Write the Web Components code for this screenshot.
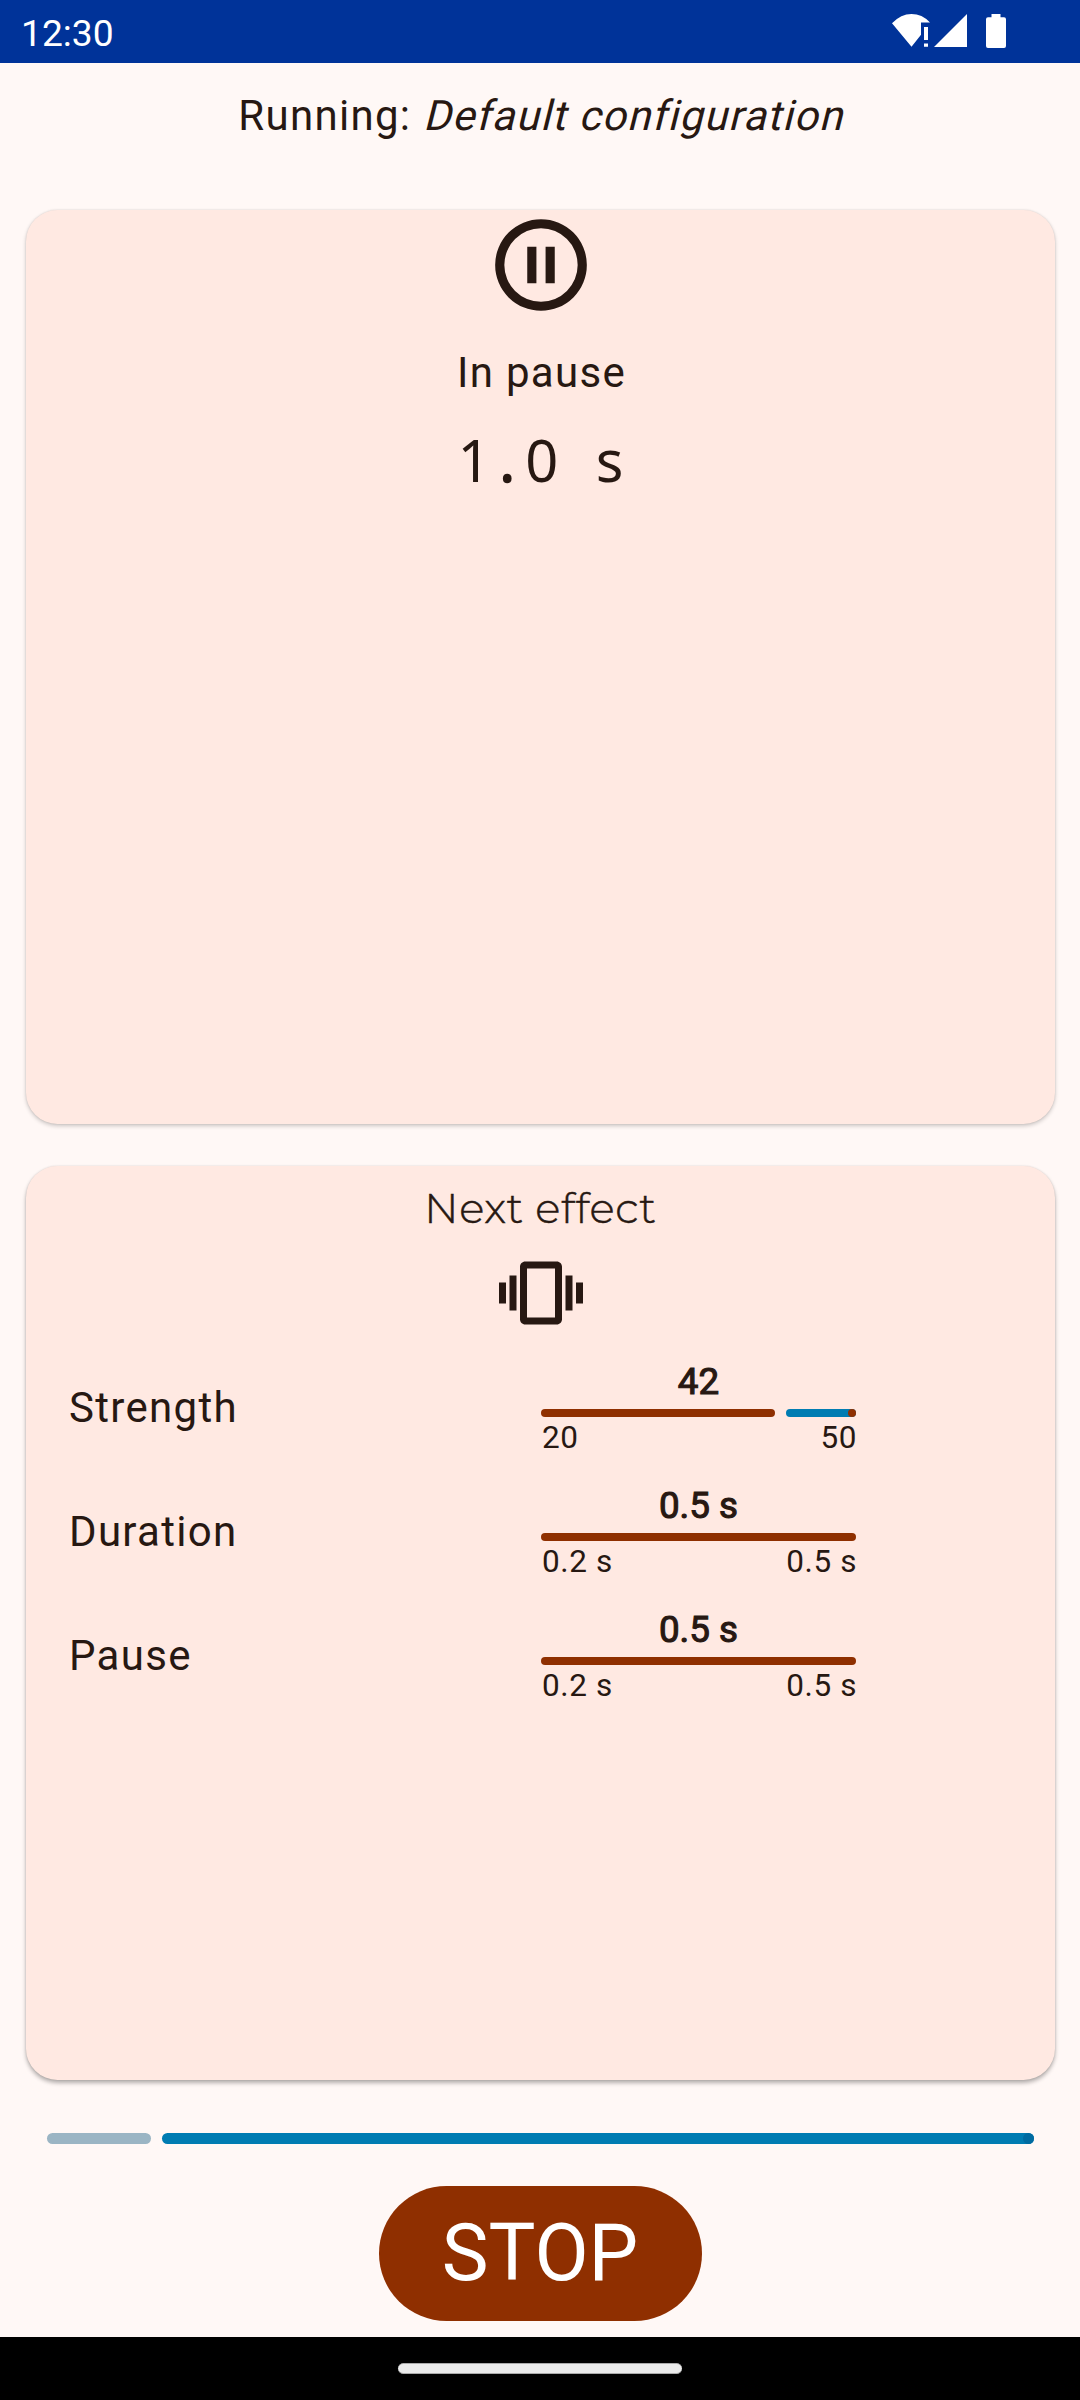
<!DOCTYPE html>
<html lang="en">
<head>
<meta charset="utf-8">
<title>Running</title>
<style>
html,body{margin:0;padding:0}
body{width:1080px;height:2400px;overflow:hidden;background:#fff8f6;color:#271812;font-family:Roboto,sans-serif}
</style>
</head>
<body>
<run-screen></run-screen>
<script>
function define(name, markup) {
  customElements.define(name, class extends HTMLElement {
    connectedCallback() {
      if (this.shadowRoot) return;
      const root = this.attachShadow({mode: 'open'});
      root.innerHTML = typeof markup === 'function' ? markup(this) : markup;
    }
  });
}

define('status-bar', `
<style>
:host{display:flex;justify-content:space-between;height:63px;background:#003399;color:#fff;flex:none}
time{font-size:37.2px;line-height:63px;padding:2px 0 0 21px;height:61px}
svg{display:block;width:120px;height:63px;margin-right:70px}
</style>
<time>12:30</time>
<svg viewBox="890 0 120 63" fill="#fff">
<path d="M892 23.2Q901 14 911.5 14Q922 14 930 22.4H921V34.8L911.5 46.7Z"/>
<path d="M924 27h4v13h-4zM924 43.6h4v3.2h-4z"/>
<path d="M967 14V47H934Z"/>
<path d="M991.5 14h9v3.3h3.5q2 0 2 2v26.700q0 2-2 2h-16q-2 0-2-2V19.300q0-2 2-2h3.500z"/>
</svg>`);

define('run-title', `
<style>
:host{display:flex;justify-content:center;flex:none;height:126px;padding:21px 0 0 1.5px;font-size:42px;line-height:63px;letter-spacing:1.3px}
span{white-space:pre}
.config{transform:skewX(-14deg);transform-origin:0 46px}
</style><span>Running: </span><span class="config"><slot></slot></span>`);

define('surface-card', `
<style>
:host{display:flex;flex-direction:column;align-items:center;box-sizing:border-box;flex:none;height:914px;margin:0 25px 0 26px;border-radius:31.5px;background:#ffe9e2;padding-left:1px;
box-shadow:0 var(--drop,2px) 4px rgba(0,0,0,var(--shade,.2)),0 0 2px rgba(0,0,0,.12)}
</style><slot></slot>`);

define('pause-status', `
<style>
:host{display:flex;flex-direction:column;align-items:center}
svg{display:block;width:110px;height:110px}
.state{margin:21px 0 0 1px;font-size:42px;line-height:63px;letter-spacing:1.3px}
.time{margin-top:19px;font:57.75px/74px "Noto Sans",sans-serif;white-space:pre;margin-right:1px}
.one{letter-spacing:9px}.dot{letter-spacing:10.200px;-webkit-text-stroke:1.6px currentColor}.zero{letter-spacing:1.600px}.gap{letter-spacing:21px}
</style>
<svg viewBox="0 0 24 24" fill="#271812"><path d="M12 2a10 10 0 1 0 0 20a10 10 0 0 0 0-20zm0 18a8 8 0 1 1 0-16a8 8 0 0 1 0 16zM9 8h2v8H9zM13 8h2v8h-2z"/></svg>
<div class="state">In pause</div>
<div class="time"><span class="one">1</span><span class="dot">.</span><span class="zero">0</span><span class="gap"> </span>s</div>`);

define('effect-heading', `
<style>
:host{display:flex;flex-direction:column;align-items:center;padding-top:12px}
.name{font:300 42px/60px Montserrat,Lato,sans-serif;letter-spacing:.6px;margin-right:1px;-webkit-text-stroke:.5px currentColor}
svg{display:block;width:84px;height:84px;margin-top:13px}
</style>
<div class="name"><slot></slot></div>
<svg viewBox="0 0 24 24" fill="#271812"><path d="M0 15h2V9H0v6zm3 2h2V7H3v10zm19-8v6h2V9h-2zm-3 8h2V7h-2v10zM16.500 3h-9C6.670 3 6 3.670 6 4.500v15c0 .83.67 1.500 1.500 1.500h9c.83 0 1.500-.67 1.500-1.500v-15c0-.83-.67-1.500-1.500-1.500zM16 19H8V5h8v14z"/></svg>`);

define('progress-track', el => {
  const done = el.getAttribute('done'), rest = el.getAttribute('rest');
  return `
<style>
:host{display:flex;gap:10.5px;height:var(--h,8px)}
i{display:block;height:100%;border-radius:99px;background:var(--bar,#8f2f00);flex:${rest ? 'none' : '1'};${rest ? 'width:' + done + 'px' : ''}}
b{display:flex;justify-content:flex-end;flex:1;height:100%;border-radius:99px;background:#007cb2}
u{display:block;height:100%;aspect-ratio:1;border-radius:50%;background:var(--stop,#8f2f00)}
</style><i></i>${rest ? '<b><u></u></b>' : ''}`;
});

define('effect-row', el => {
  const a = n => el.getAttribute(n);
  return `
<style>
:host{display:grid;grid-template-columns:472px 315px;height:124px;width:1028px;box-sizing:border-box;padding-left:42px}
.label{font-size:42px;line-height:64px;letter-spacing:1.3125px;padding-top:26px}
.value{font-size:36.75px;line-height:43px;text-align:center;margin:10px 0 6px;-webkit-text-stroke:1.1px currentColor}
.range{display:flex;justify-content:space-between;font-size:31.5px;line-height:36px;letter-spacing:.6px;margin:3px -1px 0 1px}
</style>
<div class="label">${a('label')}</div>
<div><div class="value">${a('value')}</div>
<progress-track done="${a('done') || ''}" ${a('done') ? 'rest="1"' : ''}></progress-track>
<div class="range"><span>${a('min')}</span><span>${a('max')}</span></div></div>`;
});

define('stop-button', `
<style>
:host{display:block;flex:none;align-self:center;margin-top:42px}
button{display:block;width:323px;height:135px;border:0;border-radius:68px;background:#8f2f00;color:#fff;font:78.75px/135px Roboto,sans-serif;padding:0}
</style><button><slot></slot></button>`);

define('nav-bar', `
<style>
:host{display:flex;justify-content:center;height:63px;background:#000;margin-top:auto;flex:none}
div{box-sizing:border-box;width:284px;height:11px;margin-top:26px;border-radius:6px;background:#ebebeb;border:1px solid #aaa;border-width:1px 0}
</style><div></div>`);

define('run-screen', `
<style>
:host{display:flex;flex-direction:column;width:1080px;height:2400px;background:#fff8f6}
.next{margin-top:42px;--shade:.3;--drop:3px}
.rows{margin-top:15px}
.total{flex:none;margin:53px 46px 0 47px;--h:11px;--bar:#9bb5c4;--stop:#006ba1}
</style>
<status-bar></status-bar>
<run-title>Default configuration</run-title>
<surface-card><pause-status></pause-status></surface-card>
<surface-card class="next">
<effect-heading>Next effect</effect-heading>
<div class="rows">
<effect-row label="Strength" value="42" min="20" max="50" done="234"></effect-row>
<effect-row label="Duration" value="0.5 s" min="0.2 s" max="0.5 s"></effect-row>
<effect-row label="Pause" value="0.5 s" min="0.2 s" max="0.5 s"></effect-row>
</div>
</surface-card>
<progress-track class="total" done="104" rest="1"></progress-track>
<stop-button>STOP</stop-button>
<nav-bar></nav-bar>`);
</script>
</body>
</html>
